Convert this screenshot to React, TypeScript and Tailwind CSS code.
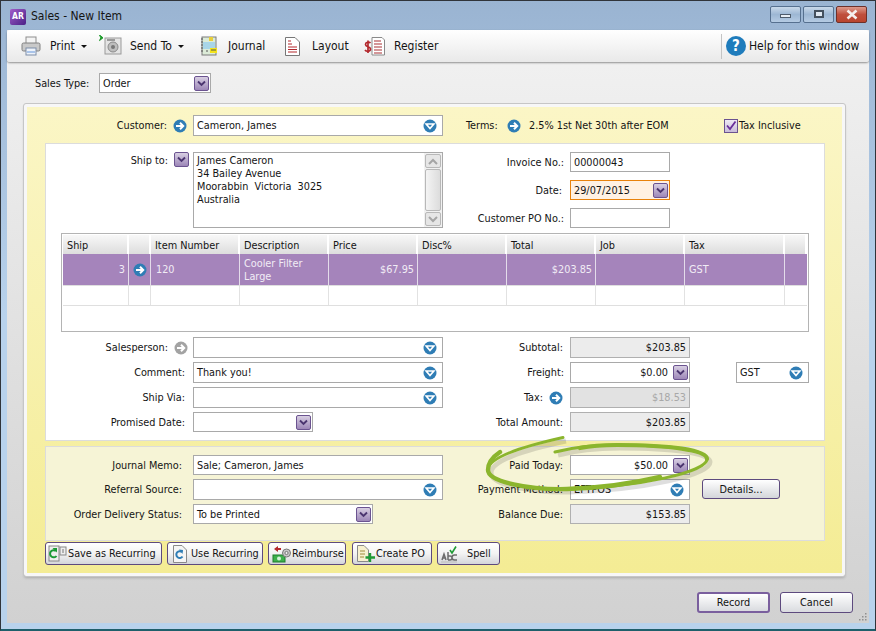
import React from "react";

const Chevron = ({ className = "" }: { className?: string }) => (
  <span className={`flex items-center justify-center w-[15px] h-[15px] rounded-[2px] border border-[#6b5390] bg-gradient-to-b from-[#d8cfe2] to-[#9d87b8] shrink-0 ${className}`}>
    <svg width="11" height="11" viewBox="0 0 11 11"><path d="M2 3.5 L5.5 7 L9 3.5" fill="none" stroke="#4b3570" strokeWidth="1.9" /></svg>
  </span>
);
const Go = ({ grey = false, className = "" }: { grey?: boolean; className?: string }) => (
  <svg width="14" height="14" viewBox="0 0 14 14" className={`shrink-0 ${className}`}>
    <circle cx="7" cy="7" r="6.5" fill={grey ? "#a3a3a3" : "#2f7db5"} />
    <path d="M3 7 H9 M7 3.8 L10.2 7 L7 10.2" fill="none" stroke="#fff" strokeWidth="2" />
  </svg>
);
const Drop = () => (
  <svg width="14" height="14" viewBox="0 0 14 14" className="shrink-0">
    <circle cx="7" cy="7" r="6.5" fill="#2f7db5" />
    <path d="M3.2 5 H10.8 L7 9.5 Z" fill="none" stroke="#fff" strokeWidth="1.7" />
  </svg>
);

const Combo = ({ w, h = "h-[21px]", text = "" }: { w: string; h?: string; text?: string }) => (
  <div className={`${w} ${h} flex items-center justify-between bg-white border border-[#a9a9a9] pl-[3px] pr-[5px] shrink-0`}>
    <span>{text}</span>
    <Drop />
  </div>
);
const Select = ({ w, text = "", cls = "bg-white border-[#a9a9a9]", right = false }: { w: string; text?: string; cls?: string; right?: boolean }) => (
  <div className={`${w} h-[20px] flex items-center border ${cls} pl-[3px] pr-[1px] shrink-0`}>
    <span className={`flex-1 ${right ? "text-right pr-[5px]" : ""}`}>{text}</span>
    <Chevron />
  </div>
);
const Box = ({ text = "", h = "h-[20px]", w = "w-[100px]" }: { text?: string; h?: string; w?: string }) => (
  <div className={`${w} ${h} flex items-center bg-white border border-[#a9a9a9] pl-[3px] shrink-0`}>{text}</div>
);
const Total = ({ text, h = "h-[21px]", muted = false }: { text: string; h?: string; muted?: boolean }) => (
  <div className={`w-[120px] ${h} flex items-center justify-end border border-[#b0b0b0] pr-[3px] shrink-0 ${muted ? "bg-[#e2e2e2] text-[#a8a8a8]" : "bg-[#ececec]"}`}>{text}</div>
);

const LeftLabel = ({ children, pr = "pr-[8px]" }: { children: React.ReactNode; pr?: string }) => (
  <div className={`w-[148px] flex items-center justify-end shrink-0 whitespace-nowrap ${pr}`}>{children}</div>
);
const RightLabel = ({ children, pr = "pr-[7px]" }: { children: React.ReactNode; pr?: string }) => (
  <div className={`w-[127px] flex items-center justify-end shrink-0 whitespace-nowrap ${pr}`}>{children}</div>
);

const Tool = ({ w, gap, icon, label, caret = false }: { w: string; gap: string; icon: React.ReactNode; label: string; caret?: boolean }) => (
  <div className={`${w} flex items-center shrink-0`}>
    {icon}
    <span className={gap}>{label}</span>
    {caret && <span className="ml-[6px] w-0 h-0 border-x-[3px] border-x-transparent border-t-[3px] border-t-[#111]" />}
  </div>
);

const Printer = () => (
  <svg width="20" height="20" viewBox="0 0 20 20" className="shrink-0">
    <rect x="5" y="1" width="10" height="7" fill="#f4f4f4" stroke="#8d8d8d" />
    <rect x="1" y="7" width="18" height="8" rx="1.5" fill="#c9c9c9" stroke="#808080" />
    <rect x="5" y="12" width="10" height="7" fill="#eef3fa" stroke="#7d8da8" />
    <rect x="6" y="15" width="8" height="2" fill="#a9c4ea" />
  </svg>
);
const SendTo = () => (
  <svg width="23" height="22" viewBox="0 0 23 22" className="shrink-0">
    <path d="M0.5 0 L4 2.8 L0.5 5.6 L1.8 2.8 Z" fill="#1f9a2c" stroke="#1f9a2c" />
    <rect x="6" y="3" width="16" height="16" fill="#e4e4e4" stroke="#9a9a9a" />
    <rect x="8" y="4" width="8" height="2" fill="#9a9a9a" />
    <circle cx="14" cy="12" r="5" fill="#bdbdbd" stroke="#8a8a8a" />
    <circle cx="14" cy="12" r="2" fill="#777" />
  </svg>
);
const JournalIcon = () => (
  <svg width="20" height="21" viewBox="0 0 20 21" className="shrink-0">
    <rect x="2" y="1" width="14" height="18" fill="#dcebd8" stroke="#7b7b7b" />
    <rect x="3" y="6" width="12" height="7" fill="#a8d5e8" />
    <rect x="9" y="1" width="4" height="4" fill="#e8cf3b" />
    <rect x="10" y="12" width="7" height="5" fill="#f3e21b" />
    <path d="M11 14 H16 M6 15 H8" stroke="#555" />
    <path d="M1 3 H3 M1 6 H3 M1 9 H3 M1 12 H3 M1 15 H3" stroke="#555" />
  </svg>
);
const LayoutIcon = () => (
  <svg width="15" height="19" viewBox="0 0 15 19" className="shrink-0">
    <path d="M0.5 0.5 H10 L14.5 5 V18.5 H0.5 Z" fill="#fff" stroke="#777" />
    <path d="M3 4 H6 M3 7 H7 M3 10 H12 M3 12.5 H12 M3 15 H12" stroke="#b3282d" strokeWidth="1.2" />
  </svg>
);
const RegisterIcon = () => (
  <svg width="21" height="19" viewBox="0 0 21 19" className="shrink-0">
    <path d="M8 0.5 H18 L20.5 3 V18 H8 Z" fill="#fff" stroke="#8a8a8a" />
    <path d="M10 4 H17 M10 7 H18 M10 10 H18 M10 13 H18 M10 16 H18" stroke="#a93035" strokeWidth="1.2" />
    <path d="M6.5 6 C5 4.5 1.5 5 1.5 7.5 C1.5 10 6.5 9.5 6.5 12 C6.5 14.5 2.5 15 1 13 M4 3.5 V16" fill="none" stroke="#b3282d" strokeWidth="1.7" />
  </svg>
);
const IconSave = () => (
  <svg width="19" height="18" viewBox="0 0 19 18" className="shrink-0">
    <rect x="1" y="1" width="10" height="15" fill="#eee" stroke="#888" />
    <rect x="12" y="2" width="6" height="8" fill="#eee" stroke="#888" />
    <path d="M14 5 H16 M14 7 H16" stroke="#777" />
    <path d="M8 6 A3.6 3.6 0 1 0 8.5 11" fill="none" stroke="#1a9a35" strokeWidth="2" />
    <path d="M4.5 3 L9 3 L9 7.5 Z" fill="#1a9a35" />
  </svg>
);
const IconUse = () => (
  <svg width="14" height="18" viewBox="0 0 14 18" className="shrink-0">
    <path d="M0.5 0.5 H9 L13.5 5 V17.5 H0.5 Z" fill="#f5f5f5" stroke="#8a8a8a" />
    <path d="M9 7 A3.4 3.4 0 1 0 9.5 11.5" fill="none" stroke="#2f7db5" strokeWidth="2" />
    <path d="M6 4.5 L10 5 L9.5 9 Z" fill="#2f7db5" />
  </svg>
);
const IconReimburse = () => (
  <svg width="20" height="18" viewBox="0 0 20 18" className="shrink-0">
    <path d="M6 1 L2 4 L6 7 V5 H9 V3 H6 Z" fill="#b3282d" />
    <rect x="1" y="10" width="12" height="7" fill="#3eb04c" stroke="#1d7e2c" />
    <circle cx="7" cy="13.5" r="2" fill="#d5f2d8" />
    <circle cx="14.5" cy="8" r="4" fill="#c9c9c9" stroke="#777" />
    <circle cx="14.5" cy="8" r="1.6" fill="#eee" stroke="#777" />
  </svg>
);
const IconPO = () => (
  <svg width="19" height="18" viewBox="0 0 19 18" className="shrink-0">
    <path d="M0.5 0.5 H7 L11.5 5 V16.5 H0.5 Z" fill="#f7f1cf" stroke="#8a8a8a" />
    <path d="M3 6 H8 M3 9 H8 M3 12 H7" stroke="#a08b3a" />
    <path d="M13 8 V17 M8.5 12.5 H18" stroke="#1f9a35" strokeWidth="2.4" />
  </svg>
);
const IconSpell = () => (
  <svg width="17" height="18" viewBox="0 0 17 18" className="shrink-0">
    <path d="M9 5 L11 8 L15 1.5" fill="none" stroke="#1f9a35" strokeWidth="1.6" />
    <path d="M1 15 L3 9 L5 15 M1.8 13 H4.2 M7 7 V15 M7 11 H9 A2 2 0 0 1 9 15 H7 M16 10 H13.5 A2.5 2.5 0 0 0 13.5 15 H16" fill="none" stroke="#6c6c6c" strokeWidth="1.5" />
    <path d="M0 17 H16" stroke="#bbb" />
  </svg>
);

const SmallBtn = ({ w, pl, gap, icon, label }: { w: string; pl: string; gap: string; icon: React.ReactNode; label: string }) => (
  <div className={`${w} h-[23px] flex items-center ${pl} rounded-[3px] border border-[#5d4a7e] bg-gradient-to-b from-white via-[#f3f3f3] to-[#d4d6da] shrink-0 whitespace-nowrap`}>
    {icon}
    <span className={gap}>{label}</span>
  </div>
);

const cols = ["w-[66px]", "w-[22px]", "w-[89px]", "w-[89px]", "w-[89px]", "w-[89px]", "w-[89px]", "w-[89px]", "w-[100px]", "w-[22px]"];
const heads = ["Ship", "", "Item Number", "Description", "Price", "Disc%", "Total", "Job", "Tax", ""];

export default function App() {
  return (
    <div className="relative w-[876px] h-[631px] overflow-hidden flex flex-col bg-gradient-to-b from-[#9ab4d2] via-[#b8d2ec] to-[#b8d2ec] border-t border-l border-r border-b-2 border-[#30343a] border-b-[#1f5f6b] text-[10.8px] leading-[13px] text-[#141414] [font-family:DejaVu_Sans_Condensed,Lato,sans-serif]">
      {/* Title bar */}
      <div className="h-[29px] flex items-center pl-[9px] pr-[8px] shrink-0 text-[12px]">
        <div className="w-[16px] h-[16px] rounded-[2px] bg-gradient-to-br from-[#a35cc9] to-[#4b1f86] text-white text-[8.5px] font-bold flex items-center justify-center mt-[2px]">AR</div>
        <div className="ml-[5px] flex-1 mt-[1px]">Sales - New Item</div>
        <div className="flex gap-[2px] -mt-[3px]">
          <div className="w-[31px] h-[17px] rounded-[2px] border border-[#56708f] bg-gradient-to-b from-[#c9d9ea] via-[#9db7d4] to-[#b5cbe3] flex items-center justify-center">
            <span className="w-[11px] h-[4px] mt-[3px] bg-[#e8eef5] border border-[#4f5c6c]" />
          </div>
          <div className="w-[31px] h-[17px] rounded-[2px] border border-[#56708f] bg-gradient-to-b from-[#c9d9ea] via-[#9db7d4] to-[#b5cbe3] flex items-center justify-center">
            <span className="w-[10px] h-[8px] border-2 border-[#44505e] bg-[#dfe8f2]" />
          </div>
          <div className="w-[31px] h-[17px] rounded-[2px] border border-[#6e3029] bg-gradient-to-b from-[#dd9a8c] via-[#bf4f3d] to-[#b9442f] flex items-center justify-center">
            <svg width="14" height="11" viewBox="0 0 14 11"><path d="M2.5 1.5 L11.5 9.5 M11.5 1.5 L2.5 9.5" stroke="#f5f0ee" strokeWidth="2.6" /></svg>
          </div>
        </div>
      </div>

      {/* Body */}
      <div className="relative ml-[6px] mr-[6px] h-[593px] flex flex-col shrink-0 bg-gradient-to-b from-[#f2f2f2] to-[#d1d1d1]">
        {/* Toolbar */}
        <div className="h-[32px] flex items-center pl-[14px] shrink-0 rounded-[3px] bg-gradient-to-b from-white to-[#e9e9e9] shadow-[0_1px_2px_rgba(0,0,0,0.4)] text-[12px]">
          <Tool w="w-[78px]" gap="ml-[9px]" icon={<Printer />} label="Print" caret />
          <Tool w="w-[101px]" gap="ml-[8px]" icon={<SendTo />} label="Send To" caret />
          <Tool w="w-[85px]" gap="ml-[8px]" icon={<JournalIcon />} label="Journal" />
          <Tool w="w-[79px]" gap="ml-[12px]" icon={<LayoutIcon />} label="Layout" />
          <Tool w="w-[80px]" gap="ml-[9px]" icon={<RegisterIcon />} label="Register" />
          <div className="ml-[277px] h-[25px] border-l border-[#c4c4c4] flex items-center pl-[4px]">
            <div className="w-[20px] h-[20px] rounded-full bg-[#1f7cbc] text-white font-bold text-[15px] flex items-center justify-center">?</div>
            <span className="ml-[3px] whitespace-nowrap">Help for this window</span>
          </div>
        </div>

        {/* Sales type */}
        <div className="h-[42px] flex items-center pl-[28px] shrink-0">
          <span className="w-[64px]">Sales Type:</span>
          <Select w="w-[112px]" text="Order" />
        </div>

        {/* Yellow panel */}
        <div className="ml-[17px] w-[821px] h-[472px] shrink-0 border-[3px] border-[#f7f7f7] outline outline-1 outline-[#c6c6c6] rounded-[2px] bg-gradient-to-b from-[#fbf6c6] to-[#f4ec94] flex flex-col pl-[18px] shadow-[0_2px_3px_rgba(0,0,0,0.2)]">
          {/* Customer row */}
          <div className="h-[21px] mt-[8px] flex items-center shrink-0">
            <LeftLabel pr="pr-[6px]"><span className="mr-[6px]">Customer:</span><Go /></LeftLabel>
            <Combo w="w-[250px]" text="Cameron, James" />
            <span className="ml-[23px] w-[41px]">Terms:</span>
            <Go />
            <span className="ml-[8px] w-[195px] whitespace-nowrap">2.5% 1st Net 30th after EOM</span>
            <span className="w-[14px] h-[14px] border border-[#6b5390] bg-gradient-to-b from-[#efeaf4] to-[#c9bcd9] flex items-center justify-center">
              <svg width="12" height="12" viewBox="0 0 12 12"><path d="M2 5.5 L5 9 L10.5 1.5" fill="none" stroke="#6a2f9a" strokeWidth="1.8" /></svg>
            </span>
            <span className="ml-[1px]">Tax Inclusive</span>
          </div>

          {/* White panel */}
          <div className="mt-[7px] w-[780px] h-[298px] shrink-0 bg-white outline outline-1 -outline-offset-1 outline-[#dcdcdc] flex flex-col">
            <div className="mt-[9px] flex h-[76px] shrink-0">
              <LeftLabel pr="pr-[4px]">
                <div className="flex items-start h-full">
                  <span className="mr-[6px] mt-[2px]">Ship to:</span><Chevron />
                </div>
              </LeftLabel>
              <div className="w-[250px] h-[76px] border border-[#a9a9a9] flex shrink-0">
                <div className="flex-1 pl-[3px] pt-[1px] leading-[13px]">
                  <div>James Cameron</div>
                  <div>34 Bailey Avenue</div>
                  <div>Moorabbin&nbsp; Victoria&nbsp; 3025</div>
                  <div>Australia</div>
                </div>
                <div className="w-[18px] flex flex-col p-[1px] gap-[1px] bg-[#f1f1f1]">
                  <div className="h-[14px] rounded-[2px] border border-[#b8b8b8] bg-[#e6e6e6] flex items-center justify-center">
                    <svg width="10" height="7" viewBox="0 0 10 7"><path d="M1 6 L5 2 L9 6" fill="none" stroke="#a5a5a5" strokeWidth="2" /></svg>
                  </div>
                  <div className="flex-1 rounded-[2px] border border-[#b8b8b8] bg-gradient-to-r from-[#f4f4f4] to-[#dcdcdc]" />
                  <div className="h-[14px] rounded-[2px] border border-[#b8b8b8] bg-[#e6e6e6] flex items-center justify-center">
                    <svg width="10" height="7" viewBox="0 0 10 7"><path d="M1 1 L5 5 L9 1" fill="none" stroke="#a5a5a5" strokeWidth="2" /></svg>
                  </div>
                </div>
              </div>
              <div className="flex flex-col gap-[8px]">
                <div className="flex h-[20px]"><RightLabel pr="pr-[6px]">Invoice No.:</RightLabel><Box text="00000043" /></div>
                <div className="flex h-[20px]"><RightLabel pr="pr-[8px]">Date:</RightLabel>
                  <div className="w-[100px] h-[20px] flex items-center border border-[#e8820c] bg-[#fff1e3] pl-[3px] pr-[1px]">
                    <span className="flex-1">29/07/2015</span><Chevron />
                  </div>
                </div>
                <div className="flex h-[20px]"><RightLabel pr="pr-[6px]">Customer PO No.:</RightLabel><Box /></div>
              </div>
            </div>

            {/* Table */}
            <div className="mt-[5px] ml-[16px] w-[748px] h-[99px] shrink-0 border border-[#b4b4b4] p-[1px] flex flex-col">
              <div className="flex h-[19px] shrink-0">
                {heads.map((h, i) => (
                  <div key={i} className={`${cols[i]} h-full flex items-center pl-[4px] pt-[1px] border-r-2 border-white bg-gradient-to-b from-[#f8f8f8] to-[#dddddd] shrink-0`}>{h}</div>
                ))}
              </div>
              <div className="flex h-[31px] shrink-0 bg-[#a584bb] text-[#f1ecf5]">
                <div className={`${cols[0]} flex items-center justify-end pr-[3px] border-r border-[#e4dcea]`}>3</div>
                <div className={`${cols[1]} flex items-center justify-center border-r border-[#e4dcea]`}><Go /></div>
                <div className={`${cols[2]} flex items-center pl-[5px] border-r border-[#e4dcea]`}>120</div>
                <div className={`${cols[3]} flex flex-col justify-center pl-[4px] border-r border-[#e4dcea]`}><div>Cooler Filter</div><div>Large</div></div>
                <div className={`${cols[4]} flex items-center justify-end pr-[3px] border-r border-[#e4dcea]`}>$67.95</div>
                <div className={`${cols[5]} border-r border-[#e4dcea]`} />
                <div className={`${cols[6]} flex items-center justify-end pr-[3px] border-r border-[#e4dcea]`}>$203.85</div>
                <div className={`${cols[7]} border-r border-[#e4dcea]`} />
                <div className={`${cols[8]} flex items-center pl-[4px] border-r border-[#e4dcea]`}>GST</div>
                <div className={cols[9]} />
              </div>
              <div className="flex h-[21px] shrink-0 border-t border-b border-[#dfdfdf]">
                {cols.map((c, i) => (<div key={i} className={`${c} ${i < 9 ? "border-r border-[#e2e2e2]" : ""}`} />))}
              </div>
            </div>

            {/* Lower form */}
            <div className="mt-[5px] flex flex-col gap-[4px]">
              <div className="flex h-[21px]">
                <LeftLabel pr="pr-[5px]"><span className="mr-[6px]">Salesperson:</span><Go grey /></LeftLabel>
                <Combo w="w-[250px]" />
                <RightLabel>Subtotal:</RightLabel>
                <Total text="$203.85" />
              </div>
              <div className="flex h-[21px]">
                <LeftLabel>Comment:</LeftLabel>
                <Combo w="w-[250px]" text="Thank you!" />
                <RightLabel pr="pr-[6px]">Freight:</RightLabel>
                <div className="w-[120px] h-[21px] flex items-center border border-[#a9a9a9] bg-white pr-[1px] shrink-0">
                  <span className="flex-1 text-right pr-[5px]">$0.00</span><Chevron />
                </div>
                <div className="ml-[46px]"><Combo w="w-[73px]" text="GST" /></div>
              </div>
              <div className="flex h-[21px]">
                <LeftLabel>Ship Via:</LeftLabel>
                <Combo w="w-[250px]" />
                <RightLabel pr="pr-[7px]"><span className="mr-[6px]">Tax:</span><Go /></RightLabel>
                <Total text="$18.53" muted />
              </div>
              <div className="flex h-[20px]">
                <LeftLabel>Promised Date:</LeftLabel>
                <Select w="w-[120px]" />
                <div className="w-[130px] shrink-0" />
                <RightLabel>Total Amount:</RightLabel>
                <Total text="$203.85" h="h-[20px]" />
              </div>
            </div>
          </div>

          {/* Lower panel */}
          <div className="mt-[5px] w-[780px] h-[95px] shrink-0 bg-[#f6f4d6] outline outline-1 -outline-offset-1 outline-[#dcdcdc] flex flex-col gap-[4px] pt-[9px]">
            <div className="flex h-[20px]">
              <LeftLabel pr="pr-[11px]">Journal Memo:</LeftLabel>
              <Box text="Sale; Cameron, James" w="w-[250px]" />
              <RightLabel>Paid Today:</RightLabel>
              <Select w="w-[120px]" text="$50.00" right />
            </div>
            <div className="flex h-[21px]">
              <LeftLabel pr="pr-[11px]">Referral Source:</LeftLabel>
              <Combo w="w-[250px]" />
              <RightLabel>Payment Method:</RightLabel>
              <Combo w="w-[120px]" text="EFTPOS" />
              <div className="ml-[12px] w-[78px] h-[20px] rounded-[3px] border border-[#5d4a7e] bg-gradient-to-b from-white to-[#d4d6da] flex items-center justify-center">Details...</div>
            </div>
            <div className="flex h-[20px]">
              <LeftLabel pr="pr-[11px]">Order Delivery Status:</LeftLabel>
              <Select w="w-[180px]" text="To be Printed" />
              <div className="w-[70px] shrink-0" />
              <RightLabel>Balance Due:</RightLabel>
              <Total text="$153.85" h="h-[20px]" />
            </div>
          </div>

          {/* Buttons */}
          <div className="mt-[1px] flex gap-[5px] shrink-0">
            <SmallBtn w="w-[117px]" pl="pl-[2px]" gap="ml-[1px]" icon={<IconSave />} label="Save as Recurring" />
            <SmallBtn w="w-[96px]" pl="pl-[5px]" gap="ml-[4px]" icon={<IconUse />} label="Use Recurring" />
            <SmallBtn w="w-[78px]" pl="pl-[3px]" gap="ml-0" icon={<IconReimburse />} label="Reimburse" />
            <SmallBtn w="w-[80px] ml-[1px]" pl="pl-[4px]" gap="ml-0" icon={<IconPO />} label="Create PO" />
            <SmallBtn w="w-[63px]" pl="pl-[3px]" gap="ml-[9px]" icon={<IconSpell />} label="Spell" />
          </div>
        </div>

        {/* Footer */}
        <div className="mt-[16px] flex justify-end gap-[10px] pr-[16px] shrink-0">
          <div className="w-[73px] h-[21px] rounded-[3px] border-2 border-[#7a5f9e] bg-gradient-to-b from-white to-[#d9dbdf] flex items-center justify-center">Record</div>
          <div className="w-[73px] h-[21px] rounded-[3px] border border-[#5d4a7e] bg-gradient-to-b from-white to-[#d9dbdf] flex items-center justify-center">Cancel</div>
        </div>

        {/* Resize grip */}
        <svg width="9" height="9" viewBox="0 0 9 9" className="absolute right-[2px] bottom-[2px]">
          <path d="M7 1 h1.5 v1.5 h-1.5 Z M4 4 h1.5 v1.5 h-1.5 Z M7 4 h1.5 v1.5 h-1.5 Z M1 7 h1.5 v1.5 h-1.5 Z M4 7 h1.5 v1.5 h-1.5 Z M7 7 h1.5 v1.5 h-1.5 Z" fill="#8f8f8f" />
        </svg>
      </div>

      {/* Green hand-drawn ring */}
      <svg width="876" height="631" viewBox="0 0 876 631" className="absolute left-[-1px] top-[-1px] pointer-events-none">
        <path d="M563 438 C 520 447, 488 458, 488 470 C 488 482, 530 490, 567 489 C 640 487, 707 472, 707 459 C 707 450, 670 445, 617 445 C 590 445, 570 448, 555 452" fill="none" stroke="#000" strokeOpacity="0.13" strokeWidth="5" transform="translate(3 3)" />
        <path d="M563 437.5 C 520 447, 488 458, 488 470 C 488 482, 530 490, 567 489 C 640 487, 707 472, 707 459 C 707 450, 670 445, 617 445 C 590 445, 570 448, 555 452" fill="none" stroke="#8bb52d" strokeWidth="3" strokeLinecap="round" />
        <path d="M500 452 C 491 458, 488 464, 488 470 C 488 482, 530 490, 567 489 C 600 488, 630 484, 660 477" fill="none" stroke="#8bb52d" strokeWidth="4.4" strokeLinecap="round" />
        <path d="M707 459 C 707 450, 670 445, 617 445 C 600 445, 590 446, 580 448" fill="none" stroke="#8bb52d" strokeWidth="4.2" strokeLinecap="round" />
      </svg>
    </div>
  );
}
